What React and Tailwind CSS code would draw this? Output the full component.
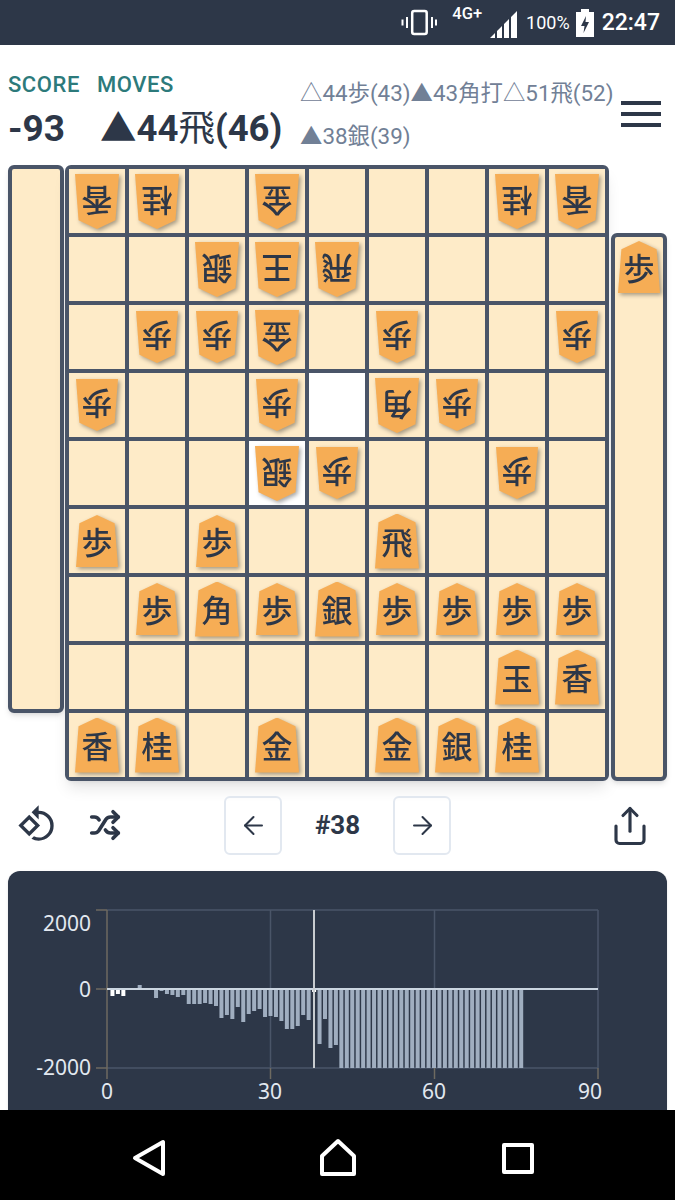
import React from "react"
import { ArrowLeft, ArrowRight, Share, Shuffle } from "lucide-react"
import { MdRotate90DegreesCcw } from "react-icons/md"

// [kanji, flipped] per square, null when empty
const f = (k) => [k, true]
const u = (k) => [k, false]
const _ = null

const board = [
  [f("香"), f("桂"), _, f("金"), _, _, _, f("桂"), f("香")],
  [_, _, f("銀"), f("王"), f("飛"), _, _, _, _],
  [_, f("歩"), f("歩"), f("金"), _, f("歩"), _, _, f("歩")],
  [f("歩"), _, _, f("歩"), _, f("角"), f("歩"), _, _],
  [_, _, _, f("銀"), f("歩"), _, _, f("歩"), _],
  [u("歩"), _, u("歩"), _, _, u("飛"), _, _, _],
  [_, u("歩"), u("角"), u("歩"), u("銀"), u("歩"), u("歩"), u("歩"), u("歩")],
  [_, _, _, _, _, _, _, u("玉"), u("香")],
  [u("香"), u("桂"), _, u("金"), _, u("金"), u("銀"), u("桂"), _],
]

// squares of the last move
const isHighlighted = (r, c) => (r === 3 && c === 4) || (r === 4 && c === 3)

// score bars in chart pixels, positive goes down from the zero line
const bars = [
  0, 7, 5, 7, 1, 1, -4, -1, -1, 9, 2, 5, 6, 8, 6, 15, 15, 15, 14, 15, 17, 29, 26, 30, 18, 33, 25, 22, 20, 28, 27, 28,
  32, 40, 40, 37, 26, 31, 3, 55, 30, 59, 56, ...Array(34).fill(79),
]

function Piece({ kanji, flipped }) {
  const isPawn = kanji === "歩"
  return (
    <div className="drop-shadow-[2px_2px_2px_rgba(0,0,0,0.35)]">
      <div
        className={`flex items-center justify-center bg-[#f6ad55] pt-1 text-[31px] leading-none font-medium text-[#2d3748] [clip-path:polygon(50%_0,92%_16%,100%_100%,0_100%,8%_16%)] ${
          isPawn ? "h-[52px] w-[42px]" : "h-[55px] w-[44px]"
        } ${flipped ? "rotate-180" : ""}`}
      >
        {kanji}
      </div>
    </div>
  )
}

function StatusBar() {
  return (
    <div className="relative flex h-[45px] items-center justify-end bg-[#2d3748] pr-[15px] text-white">
      <svg width="36" height="27" viewBox="0 0 36 27" className="mr-[15px]" fill="none" stroke="white">
        <rect x="11.2" y="2" width="14.5" height="23" rx="2" strokeWidth="2.5" />
        <path d="M6 8v11M1.5 10.5v6M31 8v11M35 10.5v6" strokeWidth="2" />
      </svg>
      <span className="mr-2 mb-[16px] text-[16.5px] leading-none font-medium">4G+</span>
      <svg width="28" height="28" viewBox="0 0 28 28" className="mt-[4px] mr-2" fill="white">
        <path d="M0 27l5-5v5zM7 27v-7l5-5v12zM14 27V13l5-5v19zM21 27V6l6-6v27z" />
      </svg>
      <span className="mr-[6px] text-[18px] leading-none">100%</span>
      <svg width="18" height="28" viewBox="0 0 18 28" className="mr-2">
        <path d="M5 0h8v3h5v25H0V3h5z" fill="white" />
        <path d="M10 7l-5 10h3.500l-1 7 5.500-11H9.500z" fill="#2d3748" />
      </svg>
      <span className="text-[23px] leading-none font-medium">22:47</span>
    </div>
  )
}

function Header() {
  return (
    <div className="flex h-[120px] pl-2">
      <div className="w-[89px]">
        <div className="mt-[27px] text-[22px] leading-[26px] font-medium tracking-wide text-[#2c7a7b]">SCORE</div>
        <div className="mt-[11px] text-[37px] leading-[40px] font-bold text-[#2d3748]">-93</div>
      </div>
      <div className="w-[203px]">
        <div className="mt-[27px] text-[22px] leading-[26px] font-medium tracking-wide text-[#2c7a7b]">MOVES</div>
        <div className="mt-[11px] ml-[3px] text-[36.5px] leading-[40px] font-bold whitespace-nowrap text-[#2d3748]">
          ▲44<span className="font-normal">飛</span>(46)
        </div>
      </div>
      <div className="mt-[27px] w-[321px] text-[22.4px] leading-[43px] text-[#718096]">
        <div className="whitespace-nowrap">△44歩(43)▲43角打△51飛(52)</div>
        <div>▲38銀(39)</div>
      </div>
      <div className="mt-[56px] flex h-fit flex-col gap-[7px]">
        <div className="h-1 w-10 bg-[#2d3748]" />
        <div className="h-1 w-10 bg-[#2d3748]" />
        <div className="h-1 w-10 bg-[#2d3748]" />
      </div>
    </div>
  )
}

function Board() {
  return (
    <div className="flex pl-2">
      <div className="h-[548px] w-14 rounded-md border-4 border-[#4a5568] bg-[#feebc8] shadow-md" />
      <div className="ml-[1px] grid grid-cols-[repeat(9,56px)] grid-rows-[repeat(9,64px)] gap-1 rounded-md border-4 border-[#4a5568] bg-[#4a5568] shadow-lg">
        {board.map((row, r) =>
          row.map((piece, c) => (
            <div
              key={`${r}-${c}`}
              className={`flex items-center justify-center ${isHighlighted(r, c) ? "bg-white" : "bg-[#feebc8]"}`}
            >
              {piece && <Piece kanji={piece[0]} flipped={piece[1]} />}
            </div>
          )),
        )}
      </div>
      <div className="mt-[68px] ml-[2px] flex h-[548px] w-14 justify-center rounded-md border-4 border-[#4a5568] bg-[#feebc8] pt-[4px] shadow-md">
        <Piece kanji="歩" flipped={false} />
      </div>
    </div>
  )
}

function Controls() {
  return (
    <div className="relative mt-[15px] flex h-[59px] items-center justify-center gap-8 text-[#2d3748]">
      <div className="absolute top-[8px] left-[17px]">
        <MdRotate90DegreesCcw size={40} />
      </div>
      <div className="absolute top-[13px] left-[89px]">
        <Shuffle size={32} strokeWidth={2.7} />
      </div>
      <button className="flex h-[59px] w-[58px] items-center justify-center rounded-md border-2 border-[#e2e8f0]">
        <ArrowLeft size={29} strokeWidth={1.7} />
      </button>
      <span className="w-[47px] text-center text-[26px] font-bold">#38</span>
      <button className="flex h-[59px] w-[58px] items-center justify-center rounded-md border-2 border-[#e2e8f0]">
        <ArrowRight size={29} strokeWidth={1.7} />
      </button>
      <div className="absolute top-[9px] left-[609px]">
        <Share size={42} strokeWidth={1.8} />
      </div>
    </div>
  )
}

function Chart() {
  const xAt = (i) => 107 + i * 5.45
  return (
    <div className="mx-2 mt-4 flex-1 overflow-hidden rounded-t-xl bg-[#2d3748] shadow-sm">
      <svg width="659" height="239" viewBox="8 871 659 239" className="block">
        <g stroke="#4a5568" strokeWidth="1.500">
          <path d="M107 910H598M107 1068H598M270.500 910V1068M434.500 910V1068M598 910V1068" fill="none" />
        </g>
        <g stroke="#6e6a60" strokeWidth="1.500">
          <path d="M107 910V1079M96 910H107M96 989H107M96 1068H107M270.500 1068V1079M434.500 1068V1079M598 1068V1079" fill="none" />
        </g>
        {bars.map((v, i) => (
          <rect
            key={i}
            x={xAt(i) - 2}
            y={v < 0 ? 989 + v : 989}
            width="4"
            height={Math.abs(v)}
            fill={i < 4 || i === 38 ? "#ffffff" : "#a0aec0"}
          />
        ))}
        <path d="M107 989H598" stroke="#cbd5e0" strokeWidth="2" />
        <path d="M314 910V1068" stroke="#c8ccd0" strokeWidth="2" />
        <g fill="#e2e8f0" fontSize="21" fontFamily="'Noto Sans', sans-serif">
          <text x="91" y="931" textAnchor="end">2000</text>
          <text x="91" y="997" textAnchor="end">0</text>
          <text x="91" y="1075" textAnchor="end">-2000</text>
          <text x="107" y="1099" textAnchor="middle">0</text>
          <text x="270" y="1099" textAnchor="middle">30</text>
          <text x="434" y="1099" textAnchor="middle">60</text>
          <text x="590" y="1099" textAnchor="middle">90</text>
        </g>
      </svg>
    </div>
  )
}

function NavBar() {
  return (
    <div className="flex h-[90px] items-center bg-black pt-[6px] pl-[131px]">
      <svg width="36" height="38" viewBox="0 0 36 38" fill="none" stroke="white" strokeWidth="4" strokeLinejoin="round">
        <path d="M32 3v32L4 19z" />
      </svg>
      <svg width="40" height="40" viewBox="0 0 40 40" className="ml-[151px]" fill="none" stroke="white" strokeWidth="4" strokeLinejoin="round">
        <path d="M20 3l16 15v18H4V18z" />
      </svg>
      <svg width="34" height="33" viewBox="0 0 34 33" className="ml-[143px]" fill="none" stroke="white" strokeWidth="4" strokeLinejoin="round">
        <rect x="3" y="3" width="28" height="27" />
      </svg>
    </div>
  )
}

export default function App() {
  return (
    <div className="flex h-[1200px] w-[675px] flex-col overflow-hidden bg-white [font-family:Roboto,'Noto_Sans_CJK_JP',sans-serif]">
      <StatusBar />
      <Header />
      <Board />
      <Controls />
      <Chart />
      <NavBar />
    </div>
  )
}
